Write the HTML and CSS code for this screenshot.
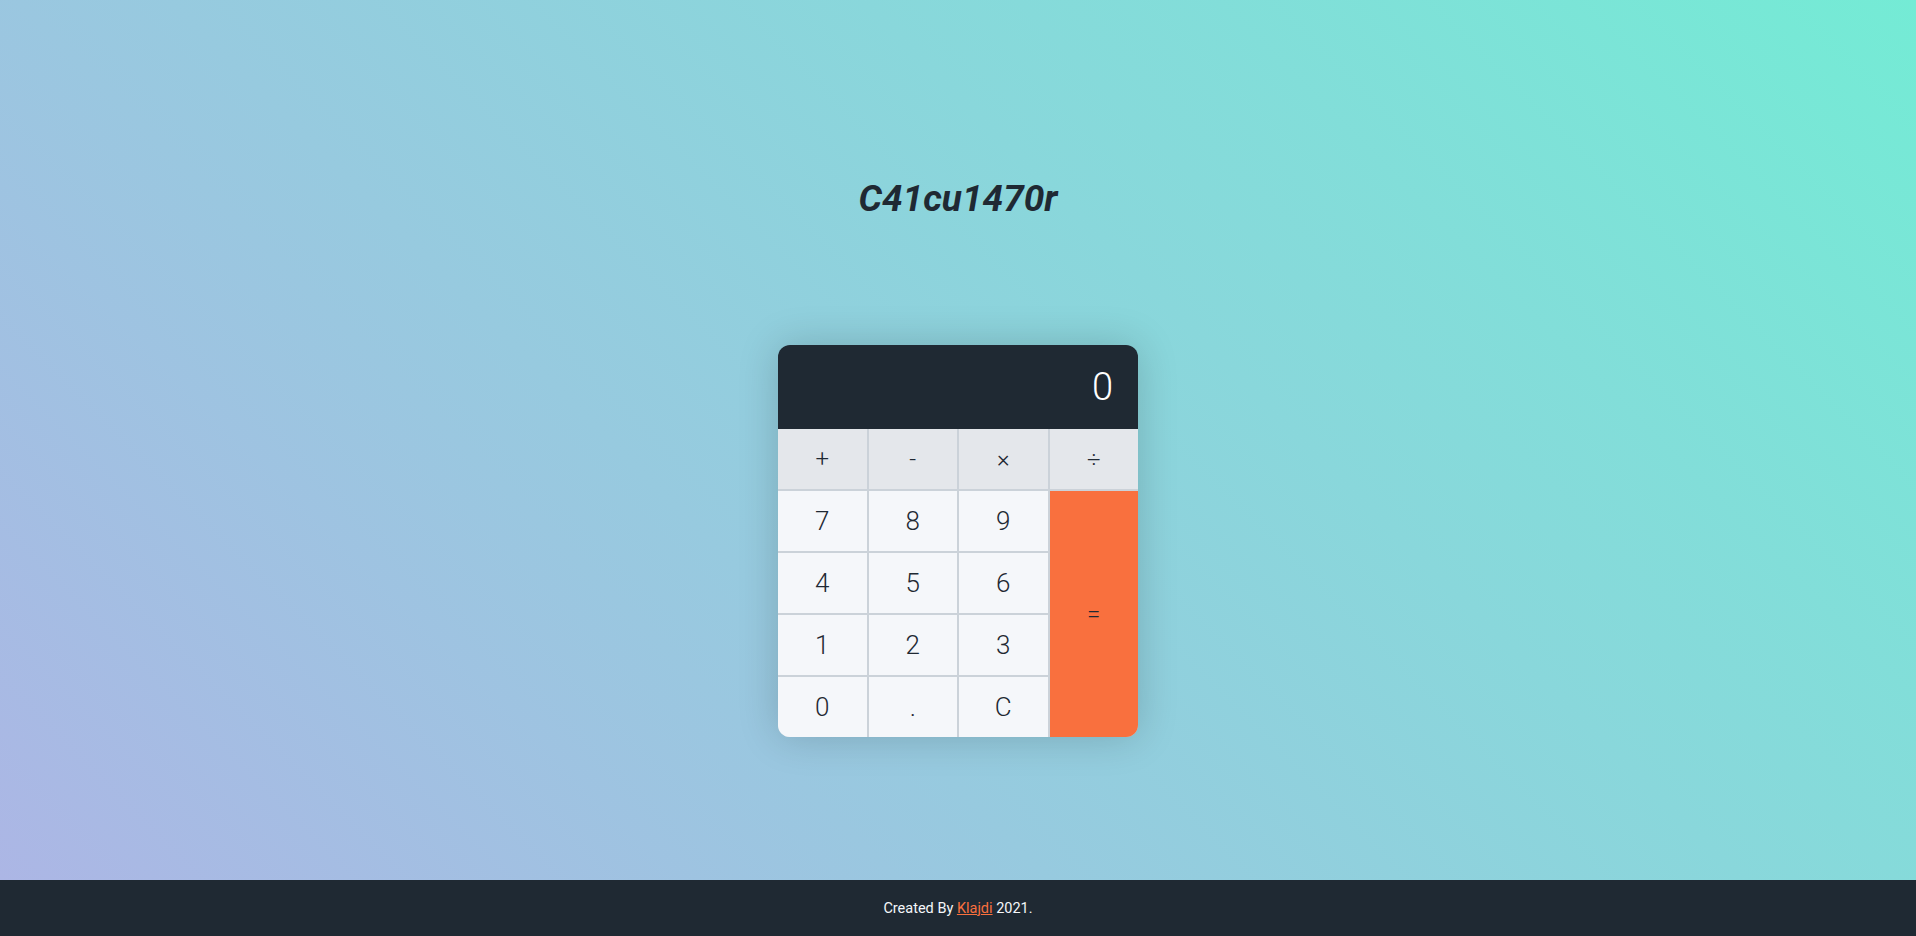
FILE: index.html
```html
<!DOCTYPE html>
<html lang="en">
<head>
<meta charset="utf-8">
<title>C41cu1470r</title>
<link rel="stylesheet" href="styles.css">
</head>
<body>
<div class="page">
  <main class="main">
    <h1 class="title">C41cu1470r</h1>
    <div class="calculator">
      <div class="display">0</div>
      <div class="keys">
        <button class="key op">+</button>
        <button class="key op">-</button>
        <button class="key op">&times;</button>
        <button class="key op">&divide;</button>
        <button class="key">7</button>
        <button class="key">8</button>
        <button class="key">9</button>
        <button class="key equal">=</button>
        <button class="key">4</button>
        <button class="key">5</button>
        <button class="key">6</button>
        <button class="key">1</button>
        <button class="key">2</button>
        <button class="key">3</button>
        <button class="key">0</button>
        <button class="key">.</button>
        <button class="key">C</button>
      </div>
    </div>
  </main>
  <footer class="footer">
    <p>Created By <a href="#">Klajdi</a> 2021.</p>
  </footer>
</div>
</body>
</html>
```

FILE: styles.css
```css
* { box-sizing: border-box; }
html, body { margin: 0; padding: 0; }
body {
  font-family: Roboto, "Liberation Sans", sans-serif;
  color: #1f2933;
}
.page {
  min-height: 100vh;
  display: flex;
  flex-direction: column;
}
.main {
  flex: 1;
  display: flex;
  flex-direction: column;
  align-items: center;
  background: linear-gradient(45deg, #acb6e5, #74ebd5);
}
.title {
  margin: 178px 0 0;
  font-size: 37px;
  line-height: 42px;
  font-weight: 700;
  font-style: italic;
  color: #1f2933;
}
.calculator {
  margin-top: 125px;
  width: 360px;
  border-radius: 12px;
  overflow: hidden;
  box-shadow: 0 0 40px rgba(0, 0, 0, 0.18);
}
.display {
  height: 84px;
  background: #1f2933;
  color: #fff;
  font-size: 38px;
  font-weight: 300;
  display: flex;
  align-items: center;
  justify-content: flex-end;
  padding-right: 25px;
}
.keys {
  display: grid;
  grid-template-columns: repeat(4, 1fr);
  grid-auto-rows: 60px;
  gap: 2px;
  background: #cbd2d9;
}
.key {
  border: none;
  margin: 0;
  padding: 0;
  background: #f5f7fa;
  font-family: Roboto, "Liberation Sans", sans-serif;
  font-size: 26px;
  font-weight: 300;
  color: #1f2933;
  cursor: pointer;
}
.key.op { background: #e4e7eb; font-size: 24px; }
.key.equal {
  grid-column: 4;
  grid-row: 2 / span 4;
  background: #f9703e;
  font-size: 24px;
}
.footer {
  height: 56px;
  background: #1f2933;
  display: flex;
  align-items: center;
  justify-content: center;
}
.footer p {
  margin: 0;
  color: #f5f7fa;
  font-size: 14.5px;
}
.footer a { color: #f9703e; }
```
